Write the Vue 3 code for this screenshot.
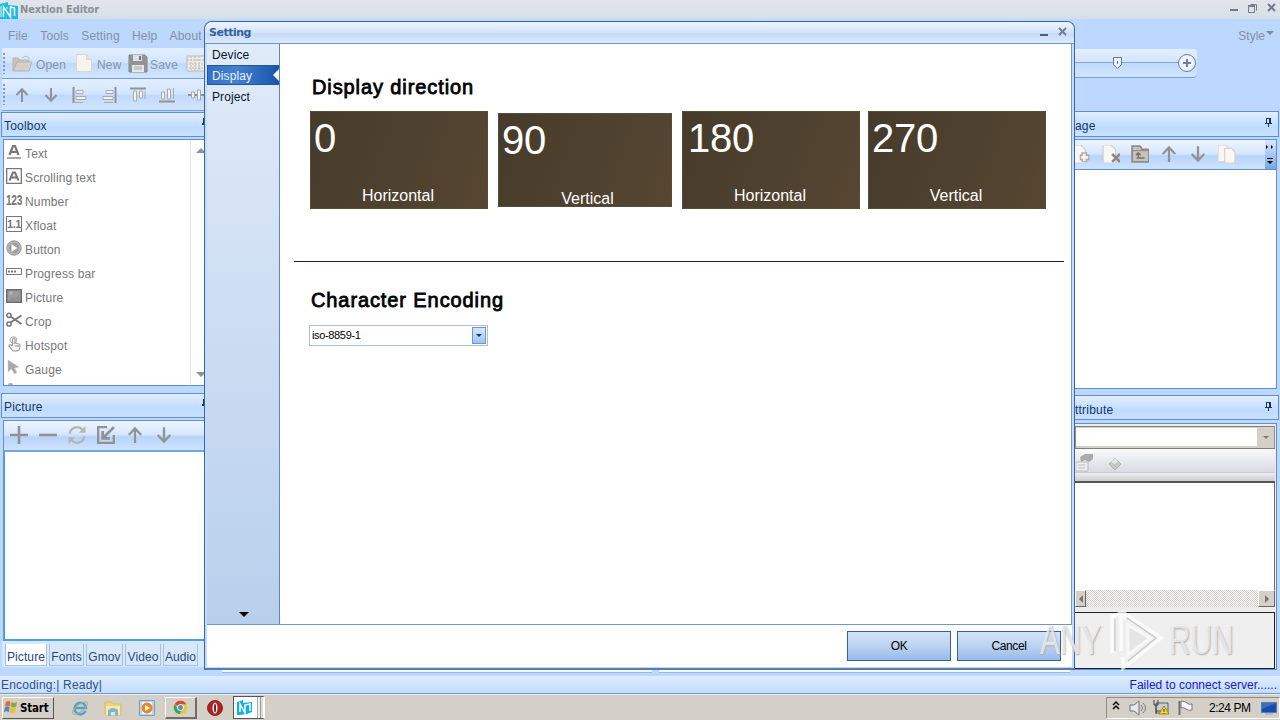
<script setup>
const G = '#929292'
const up = `<path d="M8 15V2.5M2.5 8 8 2.2 13.500 8" fill="none" stroke="${G}" stroke-width="2"/>`
const down = `<path d="M8 1v12.500M2.500 8 8 13.800 13.500 8" fill="none" stroke="${G}" stroke-width="2"/>`
const art = {
  up, down,
  left: `<path d="M1.500 0v16" stroke="${G}" stroke-width="2"/><path d="M4 3.500h7v3H4zM4 9.500h10v3H4z" fill="#f3f3f2" stroke="#aaa"/><path d="M3 15.500h8" stroke="#aaa"/>`,
  right: `<path d="M14.500 0v16" stroke="${G}" stroke-width="2"/><path d="M5 3.500h7v3H5zM2 9.500h10v3H2z" fill="#f3f3f2" stroke="#aaa"/><path d="M3 15.500h9" stroke="#aaa"/>`,
  top: `<path d="M0 1.500h16" stroke="${G}" stroke-width="2"/><path d="M3.500 4v10h3V4zM9.500 4v7h3V4z" fill="#f3f3f2" stroke="#aaa"/><path d="M15 4v8" stroke="#aaa"/>`,
  bottom: `<path d="M0 14.500h16" stroke="${G}" stroke-width="2"/><path d="M2.500 12V5h3v7zM8.500 12V2h3v10zM14.500 1v11" fill="#f3f3f2" stroke="#aaa"/>`,
  middle: `<path d="M0 8h16" stroke="${G}" stroke-width="2"/><path d="M3.500 5h3v6h-3zM9.500 3h3v10h-3z" fill="#f3f3f2" stroke="#aaa"/>`,
  plus: `<path d="M8 0v16M0 8h16" stroke="${G}" stroke-width="2.300" fill="none"/>`,
  minus: `<path d="M0 8h16" stroke="${G}" stroke-width="2.300"/>`,
  refresh: `<path d="M1.500 7A6.500 6.500 0 0 1 13 3.500M14.500 9A6.500 6.500 0 0 1 3 12.500" fill="none" stroke="#b8b5ae" stroke-width="2"/><path d="M15.500 0v6H9.500zM.5 16v-6h6z" fill="#b8b5ae"/>`,
  insert: `<path d="M9 1H1v14h14V8" fill="none" stroke="${G}" stroke-width="2.200"/><path d="M15 1 6 10M5 4.500V11h6.500" fill="none" stroke="${G}" stroke-width="2.500"/>`,
  folderup: `<path d="M1 15V1h7l2 3h6v11z" fill="#c7c3bc" stroke="#908d87" stroke-width="1.600"/><path d="M1 5h15" stroke="#908d87"/><path d="M5 11.500h7M6.500 11V7M4.500 9l2-2 2 2" stroke="#77736d" fill="none" stroke-width="1.300"/>`,
  addpage: `<path d="M0 0h7l4 4v12H0z" fill="#f8f7f4" stroke="#d5d1c9"/><path d="M10 6.500v8.500M6 11h8.500" stroke="#aaa69f" stroke-width="5"/><path d="M10 7.500v7M7 11h6.500" stroke="#f4f3ef" stroke-width="2.500"/>`,
  delpage: `<path d="M1 0h7l4 4v12H1z" fill="#f9f7f3" stroke="#d4cec4"/><path d="m9 8 7 7M16 8l-7 7" stroke="#8e8881" stroke-width="2.200"/>`,
  copy: `<path d="M0 0h7l3 3v12H0z" fill="#f9f7f3" stroke="#d6d1c8"/><path d="M6 3h6l3 3v10H6z" fill="#faf8f4" stroke="#d6d1c8"/>`,
  text: `<path d="M1 14h14" stroke="#888" stroke-width="1.500"/><path d="m3.500 11 3.500-9h2l3.500 9M5 8h6" stroke="#777" stroke-width="2.200" fill="none"/>`,
  scroll: `<path d="M.7.7h14.600v14.600H.7z" fill="none" stroke="#777" stroke-width="1.300"/><path d="m3.500 12.500 3.500-8h2l3.500 8M5 9.500h6" stroke="#777" stroke-width="2" fill="none"/>`,
  button: `<circle cx="8" cy="8" r="7.200" fill="#b5b5b5" stroke="#999"/><circle cx="8" cy="8" r="5" fill="#9b9b9b"/><path d="m5.500 4 6 4-6 4z" fill="#fff"/>`,
  progress: `<path d="M.5 4.500h15v6H.5z" fill="#fff" stroke="#777"/><path d="M2 7.500h8" stroke="#777" stroke-width="2" stroke-dasharray="2 1"/>`,
  picture: `<path d="M.7 1.700h14.600v12.600H.7z" fill="#9c9c9c" stroke="#6d6d6d" stroke-width="1.400"/><path d="m2 13 4-4 3 2 3-4 3 5" fill="#929292"/><circle cx="5" cy="5" r="2" fill="#b2b2b2"/>`,
  crop: `<path d="m4.500 4.500 11 7.500M4.500 10.500l11-7" stroke="#777" stroke-width="2"/><circle cx="3" cy="3.300" r="2.100" fill="none" stroke="#777" stroke-width="1.500"/><circle cx="3" cy="12" r="2.100" fill="none" stroke="#777" stroke-width="1.500"/>`,
  hand: `<path d="M6.500 10V3q1.500-2 2.500 0v4l4 1q1 0 1 2c0 4-1 5-4 5H7l-4-5q0-2 2-1l1.500 1M10 9v2M12 9v2" fill="#f3f3f3" stroke="#9d9d9d" stroke-width="1.200"/><circle cx="7.500" cy="4" r="3.300" fill="none" stroke="#aaa"/>`,
  cursor: `<path d="M2 0v12l3.500-3 3 5 2.500-1.300L8.500 8 13 7z" fill="#a8a8a8" stroke="#ccc" stroke-width=".5"/>`
}
const tools = [
  ['Text', 'text'], ['Scrolling text', 'scroll'], ['Number', 'number'], ['Xfloat', 'float'], ['Button', 'button'],
  ['Progress bar', 'progress'], ['Picture', 'picture'], ['Crop', 'crop'], ['Hotspot', 'hand'], ['Gauge', 'cursor']
]
const alignBar = ['up', 'down', 'left', 'right', 'top', 'bottom', 'middle']
const picBar = ['plus', 'minus', 'refresh', 'insert', 'up', 'down']
const pageBar = ['addpage', 'delpage', 'folderup', 'up', 'down', 'copy']
const tabs = ['Picture', 'Fonts', 'Gmov', 'Video', 'Audio']
const cards = [['0', 'Horizontal'], ['90', 'Vertical'], ['180', 'Horizontal'], ['270', 'Vertical']]
</script>

<template>
  <div class="screen">
    <header class="titlebar">
      <svg class="logo" width="18" height="17" viewBox="0 0 18 17"><path d="M0 2 8 0v3l10 1v13H0z" fill="#18bdea"/><path d="M3.500 15V5l7 10V5l4 1v8" fill="none" stroke="#fff" stroke-width="1.500"/><path d="M1 4v11M7 5v2" stroke="#d8f8ff"/></svg>
      <b>Nextion Editor</b>
      <svg class="wincontrols" width="52" height="16" viewBox="0 0 52 16"><path d="M2 9h8" stroke="#777b8c" stroke-width="2"/><path d="M22.500 3.500h6v6M20.500 5.500h6v6h-6z" fill="none" stroke="#777b8c"/><path d="M20 5h7" stroke="#777b8c" stroke-width="2"/><path d="m40 3 7 7M47 3l-7 7" stroke="#777b8c" stroke-width="2"/></svg>
    </header>
    <nav class="menu"><span>File</span><span>Tools</span><span>Setting</span><span>Help</span><span>About</span><span class="style">Style<i></i></span></nav>
    <div class="ribbon">
      <div class="bar open">
        <i class="grip"></i>
        <svg class="i1" width="21" height="17" viewBox="0 0 21 17"><path d="M1 16V3h5l2 2h9v3" fill="#c5c2bb" stroke="#b9b6b0"/><path d="m1 16 4-9h15l-3 9z" fill="#d3d0c9" stroke="#b9b6b0"/><path d="M10 3q4-4 8 1" fill="none" stroke="#bbb"/></svg><span class="open-t">Open</span>
        <svg class="i2" width="16" height="18" viewBox="0 0 16 18"><path d="M.5.5h10l5 5v12H.5z" fill="#f6f3ed" stroke="#ddd7cf"/><path d="M10.500.5v5h5" fill="#e8e1d8" stroke="#ddd7cf"/></svg><span class="new-t">New</span>
        <svg class="i3" width="20" height="19" viewBox="0 0 20 19"><path d="M1 1h16l2 2v15H1z" fill="#939393" stroke="#888"/><path d="M5 1h9v6H5z" fill="#dce1e8"/><path d="M4 11h12v7H4z" fill="#e4e6ea"/><path d="M6 13h8M6 15h8" stroke="#aaa"/><path d="M11 2h2v4h-2z" fill="#777"/></svg><span class="save-t">Save</span>
        <svg class="i4" width="20" height="18" viewBox="0 0 20 18"><path d="M1 2h18v15H1z" fill="#eceae4" stroke="#bebbb3"/><path d="M1 6h18M5 2v15M9 2v15M13 2v15M3 10h14M3 14h14" stroke="#bebbb3" stroke-dasharray="2 1"/></svg>
      </div>
      <div class="bar zoombar"><svg width="124" height="28" viewBox="0 0 124 28"><path d="M0 13.500h104" stroke="#8fa6c6"/><path d="M38.500 8.500h8v7l-4 4-4-4z" fill="#eaf2fc" stroke="#667489"/><path d="M42.500 12v3" stroke="#667489"/><circle cx="112" cy="14" r="8.500" fill="#eaf3ff" stroke="#747c88"/><path d="M108 14h8M112 10v8" stroke="#747e8c" stroke-width="2"/></svg></div>
      <div class="bar align"><i class="grip"></i><svg v-for="n in alignBar" :key="n" width="16" height="16" viewBox="0 0 16 16" v-html="art[n]"></svg></div>
    </div>

    <main>
      <aside class="left">
        <h2 class="toolbox-h">Toolbox<i></i></h2>
        <div class="toollist"><div class="toolrows">
          <div v-for="t in tools" :key="t[0]" class="tool">
            <b v-if="t[1] === 'number'" class="num"><em>123</em></b>
            <b v-else-if="t[1] === 'float'" class="float">1.1</b>
            <svg v-else width="16" height="16" viewBox="0 0 16 16" v-html="art[t[1]]"></svg><span>{{ t[0] }}</span>
          </div><i class="nextrow"></i></div>
          <div class="listscroll"><i class="tri-up"></i><i class="tri-down"></i></div>
        </div>
        <h2 class="picture-h">Picture<i></i></h2>
        <div class="picbar"><svg v-for="n in picBar" :key="n" width="18" height="18" viewBox="0 0 16 16" v-html="art[n]"></svg></div>
        <div class="piclist"></div>
        <div class="tabs"><span v-for="(t, i) in tabs" :key="t" :class="['tab' + i, { active: !i }]">{{ t }}</span></div>
      </aside>
      <div class="workarea"><i></i><i></i></div>
      <aside class="rightcol">
        <h2 class="page-h"><span>age</span><svg width="9" height="11" viewBox="0 0 9 11"><path d="M2.500 1v5M1 6.500h7M5.500 1v5M2 1.500h4M4.500 7v3M6.500 1v5" stroke="#12366c" fill="none"/></svg></h2>
        <div class="pagebar"><svg v-for="n in pageBar" :key="n" width="18" height="18" viewBox="0 0 16 16" v-html="art[n]"></svg><div class="more"><svg width="10" height="25" viewBox="0 0 10 25"><path d="m1 3 2 2-2 2zM6 3l2 2-2 2z"/><path d="M2 16h6v1H2zM2 19h6l-3 3z"/></svg></div></div>
        <div class="pagelist"></div>
        <h2 class="attr-h"><span>ttribute</span><svg width="9" height="11" viewBox="0 0 9 11"><path d="M2.500 1v5M1 6.500h7M5.500 1v5M2 1.500h4M4.500 7v3M6.500 1v5" stroke="#12366c" fill="none"/></svg></h2>
        <div class="attributes">
          <div class="combo"><div></div><i></i></div>
          <div class="attrbar"><svg width="52" height="19" viewBox="0 0 52 19"><path d="M4 3 9 0h8v5l-4 3-4-2-4 2z" fill="#aaa"/><path d="M0 8h12v9H0z" fill="#eee" stroke="#bbb"/><path d="M2 11h7M2 14h7" stroke="#bbb"/><path d="m39 4 6 6-6 6-6-6z" fill="#c6c6c6" stroke="#b2b2b2"/><path d="m35 8 4-4 3 3-3 3z" fill="#e7e7e7"/></svg></div>
          <div class="grid"></div>
          <div class="hscroll"><i class="arrow-left"></i><i class="arrow-right"></i></div>
          <div class="description"></div>
        </div>
      </aside>
    </main>
    <div class="status"><span>Encoding:| Ready|</span><span class="fail">Failed to connect server......</span></div>
    <footer>
      <button class="start"><svg width="15" height="15" viewBox="0 0 16 16"><path d="M2 2q3-2 5 0L6 7Q4 5 1 7z" fill="#e76531"/><path d="M8 2q3 2 6 0l-1 5q-3 2-6 0z" fill="#83af38"/><path d="M1 8q3-2 5 0l-1 5q-2-2-5 0z" fill="#438acc"/><path d="M7 8q3 2 6 0l-1 5q-3 2-6 0z" fill="#f3bb2e"/></svg>Start</button>
      <svg class="ie" width="18" height="18" viewBox="0 0 18 18"><path d="M14.500 12A5.800 5.800 0 1 1 15 9H4" fill="none" stroke="#45a4dc" stroke-width="2.500"/><ellipse cx="9" cy="9" rx="9" ry="3.500" fill="none" stroke="#b9ad68" transform="rotate(-38 9 9)"/></svg>
      <svg class="folder" width="18" height="18" viewBox="0 0 18 18"><path d="M1 3h6l2 2h8v11H1z" fill="#eed37a" stroke="#d8bd64"/><path d="M2 7h14v9H2z" fill="#f6e9ab"/><path d="M4 17v-6q5-4 10 0v6h-3v-4H7v4z" fill="#79b6d9"/></svg>
      <svg class="wmp" width="16" height="16" viewBox="0 0 16 16"><path d="M.5.5h15v15H.5z" fill="#b8d6ef" stroke="#759ec3"/><path d="M3 2h10v12H3z" fill="#f5fbff"/><circle cx="8" cy="8" r="5" fill="#ef8616" stroke="#e08127"/><path d="m6 5 5 3-5 3z" fill="#fff"/></svg>
      <div class="chrome"><svg width="15" height="15" viewBox="0 0 18 18"><circle cx="9" cy="9" r="8" fill="#efc52c"/><path d="M9 9 2 5A8 8 0 0 1 16 5H9z" fill="#da483c"/><path d="M2 5A8 8 0 0 0 8 17l3-7-4 2z" fill="#35a853"/><circle cx="9" cy="9" r="4" fill="#fff"/><circle cx="9" cy="9" r="3" fill="#518ee3"/></svg></div>
      <svg class="opera" width="16" height="16" viewBox="0 0 16 16"><circle cx="8" cy="8" r="7.500" fill="#b5201e" stroke="#8f2527"/><ellipse cx="8" cy="8" rx="2.500" ry="5.500" fill="#fff"/><ellipse cx="8" cy="8" rx="1" ry="4.500" fill="#81171d"/></svg>
      <div class="nextion"><svg width="20" height="19" viewBox="0 0 20 19"><path d="M2 4 8 2v3l9-1v10l-5 2-8 1H2z" fill="#0dafe4"/><path d="M5 14V6l5 9V7l5-1v7" fill="none" stroke="#fff" stroke-width="1.500"/></svg></div>
      <div class="tray"><svg width="90" height="21" viewBox="0 0 90 21"><path d="m6 8 3-3 3 3M6 12l3-3 3 3" fill="none" stroke="#000" stroke-width="1.500"/><path d="M23 8h4l5-4v14l-5-4h-4z" fill="#e8e8e8" stroke="#727272"/><path d="M34 8q3 3 0 6M36 6q5 5 0 10" fill="none" stroke="#777"/><path d="M49 6h12v10H49z" fill="#c5cdd2" stroke="#59626d"/><path d="M47 3v5h4V3M49 8v9M49 14h8" stroke="#3e4145" fill="none"/><path d="m57 9 5 8H52z" fill="#ffdc22" stroke="#a48517"/><path d="M57 12v3M57 16v1" stroke="#333"/><path d="M72.500 4v14" stroke="#707070" stroke-width="2"/><path d="M74 4q4 0 6 2t5 1v6q-4 1-6-1t-5-1z" fill="#f9f9f9" stroke="#777"/></svg><span>2:24 PM</span><svg class="monitor" width="16" height="14" viewBox="0 0 16 14"><path d="M.5 1.500h15v10H.5z" fill="#174da8" stroke="#567bad"/><path d="M1 2h14L1 8z" fill="#3770be"/><path d="M4 12h8v2H4z" fill="#aebbd0"/></svg></div>
    </footer>

    <section class="dialog">
      <div class="dialogtitle"><b>Setting</b><svg width="36" height="16" viewBox="0 0 36 16"><path d="M4 11h8" stroke="#485d83" stroke-width="2"/><path d="m23 4 7 7M30 4l-7 7" stroke="#6e7e9e" stroke-width="2"/></svg></div>
      <div class="dialogbody">
        <nav class="side"><span>Device</span><span class="selected">Display</span><span>Project</span><i></i></nav>
        <div class="content">
          <h1>Display direction</h1>
          <div class="cards"><div v-for="(c, i) in cards" :key="c[0]" class="card" :class="'card' + i"><strong>{{ c[0] }}</strong><span>{{ c[1] }}</span></div></div>
          <hr>
          <h1 class="encoding">Character Encoding</h1>
          <div class="select"><span>iso-8859-1</span><i></i></div>
        </div>
      </div>
      <div class="dialogfooter"><button>OK</button><button>Cancel</button></div>
    </section>
    <div class="watermark"><span>ANY</span><svg width="60" height="62" viewBox="0 0 60 62"><path d="M6 44V8l9-4v38M18 10V4l37 25-38 30V48" fill="none" stroke="#fff" stroke-width="3.500" opacity=".75"/><path d="M22 16v30l22-17z" fill="#ddd" stroke="#fff" stroke-width="3" opacity=".55"/><path d="m21 9 29 20-28 23M9 42V10" fill="none" stroke="#aaa" stroke-width="1.200" opacity=".6"/></svg><span class="run">RUN</span></div>
  </div>
</template>

<style>
html, body { margin: 0; overflow: hidden; }
</style>
<style scoped>
* { box-sizing: border-box; }
.screen { position: relative; width: 1280px; height: 720px; overflow: hidden; display: flex; flex-direction: column; background: #bcd8fe; font: 12px/16px "Liberation Sans", sans-serif; color: #1b417d; }
.screen > * { flex-shrink: 0; }
svg { display: block; flex: none; }
button { font: inherit; padding: 0; }
h1, h2 { margin: 0; font-weight: normal; }
.titlebar { height: 19px; display: flex; align-items: center; background: linear-gradient(#e2e6ec, #dce2e8 55%, #d5dfe9); }
.logo { margin: 2px 0 0; }
.titlebar b { margin-left: 2px; color: #8c9095; font: bold 11px/18px "DejaVu Sans Condensed", "DejaVu Sans", sans-serif; letter-spacing: -.1px; }
.wincontrols { margin: -2px 0 0 auto; width: 52px; }
.menu { height: 29px; display: flex; align-items: center; padding: 5px 6px 0 8px; color: #858fa1; letter-spacing: .15px; }
.menu span { margin-right: 12.3px; }
.menu .style { margin: 0 0 0 auto; letter-spacing: 0; display: flex; }
.menu i { margin: 3px 0 0 1px; border: 4px solid transparent; border-top: 4px solid #7d8b9e; border-bottom: 0; height: 0; }
.ribbon { height: 63px; display: grid; grid-template-columns: 1075px 122px; grid-template-rows: 31px 32px; }
.bar { display: flex; align-items: center; background: linear-gradient(#e2efff, #d2e5ff 48%, #bfd9ff 52%, #d1e5ff); border-bottom: 1px solid #739ed4; }
.open { height: 31px; margin-left: 2px; color: #8c929f; letter-spacing: .15px; }
.grip { width: 2px; height: 21px; margin-left: 1px; background: repeating-linear-gradient(#8497b4 0 2px, transparent 2px 4px); }
.i1 { margin-left: 7px; }.open-t { width: 31px; margin: 4px 9px 0 3px; }.new-t { width: 25px; margin: 4px 6px 0 5px; }.save-t { width: 29px; margin: 4px 7px 0 2px; }
.zoombar { height: 29px; margin-top: 1px; border-radius: 0 4px 4px 0; overflow: hidden; }
.align { margin-left: 2px; height: 32px; gap: 13px; }
.align .grip { margin-right: -4px; }
main { height: 565px; display: flex; justify-content: space-between; }
.left { width: 205px; padding: 1px 0 0 1px; }
h2 { font-size: 12px; line-height: 26px; height: 25px; padding-left: 2px; letter-spacing: .2px; color: #12366c; border: 1px solid #628fcc; background: linear-gradient(#e0eeff, #bfdbff 65%, #cae1ff); }
.left h2 { border-right: 0; display: flex; justify-content: space-between; }
.left h2 i { width: 3px; height: 7px; margin-top: 5px; border-bottom: 2px solid #12366c; border-right: 2px solid #12366c; }
.toollist { height: 247px; margin: 2px 0 7px 2px; border: 1px solid #568fdb; display: flex; background: #fff; overflow: hidden; }
.tool { display: flex; align-items: center; height: 24px; padding: 0 0 0 2px; color: #777; font-size: 12px; }
.toolrows { flex: 1; }
.nextrow { display: block; width: 5px; height: 2px; margin: 3px 0 0 4px; background: #b0b0b0; border-radius: 3px 3px 0 0; }
.tool span { margin: 3px 0 0 3px; letter-spacing: .15px; }
.tool .num { width: 16px; }
.num em { display: block; width: 24px; font: bold 15px/16px "Liberation Sans", sans-serif; letter-spacing: -.5px; transform: scaleX(.68); transform-origin: left; }
.tool .float { width: 16px; height: 16px; border: 1px solid #777; font-size: 11px; line-height: 14px; letter-spacing: -.5px; text-align: center; }
.listscroll { width: 14px; border-left: 1px solid #e4e4e4; padding: 8px 0 8px 5px; display: flex; flex-direction: column; justify-content: space-between; }
.tri-up, .tri-down { width: 10px; height: 5px; border: 5px solid transparent; border-top: 0; border-bottom-color: #8d91a0; }
.tri-down { border-bottom: 0; border-top: 5px solid #8d91a0; }
.picbar { margin: 2px 0 0 2px; height: 32px; padding: 0 6px 2px; display: flex; align-items: center; gap: 11px; border: 1px solid #5d91d5; border-bottom: 2px solid #71a6df; background: linear-gradient(#eef5ff, #d6e7ff 46%, #b8d4fa 56%, #cfe3ff); }
.piclist { height: 189px; margin-left: 2px; border: 2px solid #4b9fe6; border-right: 0; border-top: 0; background: #fff; }
.tabs { height: 26px; margin-left: 1px; padding: 3px 3px 1px; display: flex; background: #d8e9ff; gap: 2px; color: #24487f; }
.tabs span { height: 22px; border: 1px solid #a6c1e4; border-top: 0; text-align: center; padding-top: 5px; background: #d8e8fb; letter-spacing: .1px; }
.tab0 { width: 42px; }.tab1 { width: 35px; }.tab2 { width: 37px; }.tab3 { width: 36px; }.tab4 { width: 35px; }
.tabs .active { background: #fff; }
.workarea { flex: 1; align-self: flex-end; height: 7px; display: flex; gap: 7px; padding: 0 5px 3px 17px; }
.workarea i { background: #f4f9ff; border-bottom: 1px solid #96b9e6; flex: 430 0 0; }
.workarea i + i { flex-grow: 411; }
.rightcol { width: 205px; }
.rightcol h2 { display: flex; justify-content: space-between; padding: 0 5px 0 0; border-left: 0; height: 26px; margin-right: 1px; line-height: 28px; }
.rightcol h2 svg { margin-top: 5px; }
.pagebar { height: 31px; margin: 2px 3px 0 0; padding-bottom: 1px; border: 1px solid #5d91d5; border-left: 0; background: linear-gradient(#eef5ff, #d6e7ff 46%, #b8d4fa 56%, #cfe3ff); display: flex; align-items: center; gap: 11px; }
.pagebar > svg:first-child { margin-left: -2px; }
.more { margin-left: auto; width: 11px; height: 29px; padding-top: 2px; background: linear-gradient(#d8e7ff, #79a5e2); }
.pagelist { height: 219px; margin-right: 3px; background: #fff; border: 1px solid #568fdb; border-top: 0; border-left: 0; }
.rightcol .attr-h { margin-top: 6px; height: 25px; }
.attributes { height: 247px; margin: 3px 3px 0 0; border: 1px solid #568fdb; border-left: 0; padding: 2px 1px 0 0; background: #ececec; display: flex; flex-direction: column; }
.combo { height: 23px; border: 1px solid; border-color: #827f79 #929087; background: #d4d0c8; display: flex; padding: 1px 0 2px; }
.combo div { width: 181px; background: #fff; }.combo i { margin: 8px 0 0 6px; width: 6px; height: 3px; border: 3px solid transparent; border-bottom: 0; border-top-color: #807c72; }
.attrbar { height: 34px; padding: 5px 0 0 1px; background: linear-gradient(#f9f9fb, #d9dbe3 72%, #b9bdc5 75%, #ececef 76%, #ccc); border-bottom: 2px solid #555; }
.grid { height: 107px; background: #fff; border-right: 1px solid #716d68; }
.hscroll { height: 17px; background: repeating-conic-gradient(#d4d0c8 0 25%, #fff 0 50%) 0 0 / 2px 2px; display: flex; justify-content: space-between; }
.hscroll i { width: 17px; height: 17px; background: #d4d0c8; border: 1px solid #fff; border-right-color: #666; border-bottom-color: #666; display: grid; place-items: center; }
.arrow-left::before, .arrow-right::before { content: ""; border: 4px solid transparent; border-left: 0; border-right-color: #77736d; }
.arrow-right::before { border-left: 4px solid #77736d; border-right: 0; }.hscroll .arrow-left { width: 11px; }
.description { height: 57px; border: 1px solid #222; border-left: 0; background: #efefef; margin-top: 5px; }
.status { height: 18px; border-bottom: 1px solid #6d99d1; display: flex; justify-content: space-between; align-items: center; padding: 1px 3px 0 1px; color: #2f5189; letter-spacing: .2px; background: linear-gradient(#dfedff, #c3dcff); }
.fail { color: #1616cf; letter-spacing: 0; }
footer { height: 26px; border-top: 1px solid #eee; background: #d4d0c8; display: flex; align-items: center; color: #000; }
.start { width: 52px; height: 22px; margin-left: 2px; border: 1px solid #fff; border-right-color: #555; border-bottom-color: #555; background: #d4d0c8; font: bold 11.500px/18px "DejaVu Sans Condensed", "DejaVu Sans", sans-serif; letter-spacing: -.2px; display: flex; align-items: center; gap: 1px; padding-left: 1px; }
.ie { margin-left: 17px; }.folder { margin-left: 15px; }.wmp { margin-left: 17px; }
.chrome { width: 32px; height: 22px; margin-left: 10px; border: 1px solid #fff; border-right: 2px solid #706d68; border-bottom: 2px solid #706d68; display: grid; place-items: center; }
.opera { margin-left: 10px; }.nextion { width: 32px; height: 23px; margin-left: 10px; border: 1px solid #555; border-right: 2px solid #fff; padding: 1px; background: linear-gradient(90deg, #fff 0 23px, #aaa 23px 24px, #eee 24px 26px, #999 26px 27px, #ddd 27px); }
.tray { margin-left: auto; width: 174px; height: 22px; border: 1px solid #908c85; border-right-color: #fff; border-bottom-color: #fff; display: flex; align-items: center; font-size: 12px; }
.tray span { margin-left: 12px; letter-spacing: -.45px; }.monitor { margin-left: 10px; }
.dialog { position: absolute; left: 204px; top: 21px; width: 871px; height: 649px; padding: 1px 2px 2px; border: 1px solid #3865a5; border-bottom: 2px solid #567dad; border-radius: 8px 8px 0 0; background: #c5dcf8; overflow: hidden; color: #08152c; }
.dialogtitle { height: 22px; background: linear-gradient(#eef5fe, #d3e2fa 50%, #c9dafa 55%, #d9eaff); margin: -1px -2px 0; padding: 0 2px 1px 4px; display: flex; align-items: center; justify-content: space-between; border-bottom: 1px solid #6f96c9; }
.dialogtitle b { font: bold 11px/17px "DejaVu Sans", sans-serif; letter-spacing: -.5px; color: #345f9f; }
.dialogbody { height: 581px; display: flex; background: #fff; border-right: 1px solid #7099ca; border-bottom: 1px solid #7296c9; }
.side { width: 73px; border-right: 1px solid #5e86be; background: linear-gradient(#e0ebf8, #b8cfec); display: flex; flex-direction: column; }
.side span { height: 20px; padding: 3px 5px; line-height: 17px; margin-bottom: 1px; letter-spacing: .1px; }
.side .selected { background: linear-gradient(90deg, #3472c7, #4380d0 40%, #1955ab); border: 1px solid #2055a0; color: #e7f3ff; position: relative; padding: 2px 4px; }
.selected::after { content: ""; position: absolute; right: -1px; top: 3px; border: 6px solid transparent; border-right-color: #fff; border-left: 0; }
.side i { margin: auto auto 7px 32px; border: 5px solid transparent; border-top-color: #000; border-bottom: 0; width: 0; height: 0; }
.content { flex: 1; padding-left: 30px; }
h1 { font: 20px/24px "Liberation Sans", sans-serif; -webkit-text-stroke: .8px #000; color: #000; margin: 31px 0 0 2px; letter-spacing: .9px; width: max-content; }
.cards { display: grid; grid-template-columns: 178px 174px 178px 178px; column-gap: 10px; height: 98px; margin-top: 12px; align-items: center; }
.card { height: 98px; background: linear-gradient(110deg, #463b2b, #564632); border: 1px solid #574b39; color: #fff; display: flex; flex-direction: column; justify-content: space-between; }
.card1 { height: 94px; }.card3 { width: 178px; margin-left: -2px; }
.card strong { font: 40px/50px "Liberation Sans", sans-serif; margin: 1px 0 0 3px; letter-spacing: -.3px; }
.card2 strong { margin-left: 5px; }
.card span { font-size: 16px; line-height: 20px; text-align: center; padding: 0 2px 2px 0; }
.card1 span { margin-bottom: -3px; padding: 0 0 0 5px; }
hr { height: 1px; border: 0; background: #191956; margin: 52px 7px 0 -16px; }
.encoding { margin: 26px 0 0 1px; }
.select { width: 179px; height: 21px; margin: 13px 0 0 -1px; border: 1px solid #aebfd6; color: #000; padding: 1px; display: flex; justify-content: space-between; font-size: 11px; line-height: 17px; letter-spacing: -.35px; }
.select span { margin-left: 1px; }.select i { width: 14px; height: 17px; border: 1px solid #6d96ce; background: linear-gradient(#d5e6fd, #9fc3f2); display: grid; place-items: center; }
.select i::after { content: ""; border: 3px solid transparent; border-top-color: #113873; border-bottom: 0; }
.dialogfooter { height: 42px; padding: 6px 11px 6px; display: flex; justify-content: flex-end; gap: 6px; background: #fff; }
.dialogfooter button { width: 104px; height: 30px; border: 1px solid #365f9e; background: linear-gradient(#d2e3f8, #bdd3f1 50%, #97bae9); font-size: 12px; letter-spacing: -.4px; color: #000; }
.watermark { position: absolute; left: 1040px; top: 609px; display: flex; align-items: center; color: rgba(255,255,255,.65); font: 42px/60px "Liberation Sans Narrow", "Liberation Sans", sans-serif; text-shadow: 1px 1px 2px #aaa; pointer-events: none; }
.watermark span { width: 66px; transform: scaleX(.71); transform-origin: left; }
.watermark .run { margin-left: 3px; }
</style>
